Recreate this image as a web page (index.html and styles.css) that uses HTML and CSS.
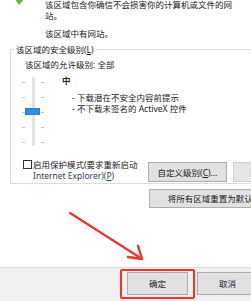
FILE: index.html
```html
<!DOCTYPE html>
<html lang="zh-CN">
<head>
<meta charset="utf-8">
<title>安全设置</title>
<link rel="stylesheet" href="styles.css">
</head>
<body>
  <div class="intro">
    <svg class="zone-icon" width="16" height="16" viewBox="0 0 16 16">
      <polygon points="0,7 4,3 6,6 11,0 16,4 6,16" fill="#5fb832"/>
    </svg>
    <div class="intro-text">
      <p>该区域包含你确信不会损害你的计算机或文件的网站。</p>
      <p>该区域中有网站。</p>
    </div>
  </div>

  <fieldset class="sec">
    <legend>该区域的安全级别(<u>L</u>)</legend>
    <div class="allowed">该区域的允许级别: 全部</div>
    <div class="level">
      <div class="slider">
        <div class="ticks"><i></i><i></i><i></i><i></i><i></i></div>
        <div class="track"></div>
        <div class="ticks"><i></i><i></i><i></i><i></i><i></i></div>
        <div class="thumb"></div>
      </div>
      <div class="desc">
        <div class="name">中</div>
        <ul class="bullets">
          <li>- 下载潜在不安全内容前提示</li>
          <li>- 不下载未签名的 ActiveX 控件</li>
        </ul>
      </div>
    </div>
    <div class="bottom-row">
      <label class="protect">
        <span class="cb"></span>
        <span class="protect-text">启用保护模式(要求重新启动<br><span class="ie">Internet Explorer)(<u>P</u>)</span></span>
      </label>
      <div class="btns">
        <button class="btn custom">自定义级别(<u>C</u>)...</button>
        <button class="btn def" disabled>默认级别(<u>D</u>)</button>
      </div>
    </div>
  </fieldset>

  <div class="reset-row">
    <button class="btn reset">将所有区域重置为默认级别(<u>R</u>)</button>
  </div>

  <footer class="footer">
    <button class="btn ok">确定</button>
    <button class="btn cancel">取消</button>
  </footer>

  <div class="mark-box"></div>
  <svg class="mark-arrow" width="251" height="301" viewBox="0 0 251 301">
    <line x1="70" y1="213" x2="139" y2="257" stroke="#f0342a" stroke-width="2.2" stroke-linecap="round"/>
    <polyline points="128,257 142,259 138,246" fill="none" stroke="#f0342a" stroke-width="2.4" stroke-linejoin="round" stroke-linecap="round"/>
  </svg>
</body>
</html>
```

FILE: styles.css
```css
* { box-sizing: border-box; }

html, body { margin: 0; padding: 0; }

body {
  width: 251px;
  height: 301px;
  overflow: hidden;
  position: relative;
  background: #ffffff;
  font-family: "Noto Sans", "Noto Sans CJK SC", sans-serif;
  font-size: 8.5px;
  line-height: 11px;
  color: #222222;
  display: flex;
  flex-direction: column;
}

u { text-decoration: underline; text-underline-offset: 1px; }

/* intro */
.intro {
  display: flex;
  align-items: flex-start;
  gap: 16px;
  padding-left: 13px;
  margin-top: -1px;
}
.zone-icon { flex: none; margin-top: -10px; }
.intro-text p { margin: 0; width: 190px; }
.intro-text p + p { margin-top: 7px; }

/* security level group */
.sec {
  margin: 4.5px 0 0 10px;
  width: 262px;
  min-width: 0;
  border: 1px solid #dcdcdc;
  padding: 0 0 1px 11px;
}
.sec legend {
  margin-left: -8px;
  padding: 0 2px;
  color: #222;
}
.allowed { margin: 4px 0 0 3px; }

.level {
  display: flex;
  align-items: flex-start;
  margin-top: 5px;
}
.slider {
  position: relative;
  display: flex;
  margin-top: 2.5px;
  height: 69px;
}
.ticks {
  width: 3px;
  display: flex;
  flex-direction: column;
  gap: 14px;
  padding-top: 5px;
}
.ticks i {
  display: block;
  width: 3px;
  height: 1px;
  background: #c4c4c4;
}
.track {
  width: 3px;
  margin: 0 6px 0 7px;
  background: #e4e4e4;
}
.thumb {
  position: absolute;
  left: 3px;
  top: 31px;
  width: 15px;
  height: 7px;
  background: #2d8ee6;
  border: 1px solid #2a80d2;
}
.desc { margin-left: 18px; }
.name { font-weight: bold; }
.bullets {
  list-style: none;
  margin: 6px 0 0 10px;
  padding: 0;
}

.bottom-row {
  display: flex;
  align-items: flex-start;
  margin-top: 12.5px;
}
.protect {
  display: flex;
  align-items: flex-start;
  width: 125px;
  margin-left: 1px;
  flex: none;
}
.cb {
  flex: none;
  width: 9px;
  height: 9px;
  margin-top: 1.5px;
  border: 1px solid #333;
  background: #fff;
}
.protect-text { margin-left: 1px; white-space: nowrap; }
.ie { color: #2c3e5c; }

.btns {
  display: flex;
  gap: 6px;
  margin-top: 3.5px;
}

.btn {
  font: inherit;
  line-height: 11px;
  color: #222;
  background: #e1e1e1;
  border: 1px solid #adadad;
  padding: 0;
  margin: 0;
  flex: none;
  white-space: nowrap;
}
.custom { width: 79px; height: 20px; }
.def {
  width: 79px;
  height: 20px;
  background: #e6e6e6;
  border-color: #d0d0d0;
  color: #b0b0b0;
}

.reset-row { margin: 5px 0 0 149px; }
.reset { width: 150px; height: 19px; }

/* footer */
.footer {
  margin-top: auto;
  height: 34px;
  flex: none;
  background: #f0f0f0;
  border-top: 1px solid #dcdcdc;
  padding: 4px 0 0 127px;
  display: flex;
  align-items: flex-start;
  gap: 9px;
}
.ok, .cancel { width: 61px; height: 23px; }

/* annotation overlay */
.mark-box {
  position: absolute;
  left: 120px;
  top: 269px;
  width: 75px;
  height: 30px;
  border: 2px solid #f0342a;
  border-radius: 2px;
}
.mark-arrow {
  position: absolute;
  left: 0;
  top: 0;
  pointer-events: none;
}
```
